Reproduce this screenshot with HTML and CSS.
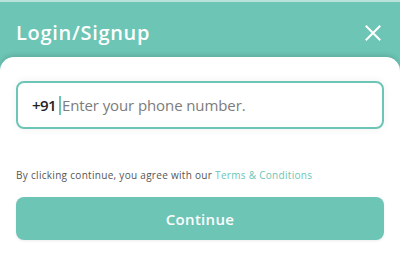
FILE: index.html
```html
<!DOCTYPE html>
<html>
<head>
<meta charset="utf-8">
<link rel="stylesheet" href="styles.css">
</head>
<body>
<div class="topline"></div>
<header class="header">
  <h1 class="title">Login/Signup</h1>
  <button class="close" aria-label="Close">
    <svg width="16" height="16" viewBox="0 0 16 16"><path d="M1.5 1.5 L14.5 14.5 M14.5 1.5 L1.5 14.5" stroke="#fff" stroke-width="2" stroke-linecap="square" fill="none"/></svg>
  </button>
</header>
<main class="card">
  <div class="phone">
    <span class="code">+91</span>
    <span class="caret"></span>
    <span class="placeholder">Enter your phone number.</span>
  </div>
  <p class="terms">By clicking continue, you agree with our <a class="link">Terms &amp; Conditions</a></p>
  <button class="continue">Continue</button>
</main>
</body>
</html>
```
FILE: styles.css
```css
* { box-sizing: border-box; }
html, body { margin: 0; padding: 0; }
body {
  width: 400px;
  height: 253px;
  overflow: hidden;
  background: #6cc5b5;
  font-family: "Open Sans", "Liberation Sans", sans-serif;
}
.topline {
  height: 2px;
  background: #b9e2da;
}
.header {
  height: 55px;
  display: flex;
  align-items: center;
  justify-content: space-between;
  padding: 5px 19px 0 16px;
}
.title {
  margin: 0;
  color: #fff;
  font-size: 20px;
  font-weight: 600;
  letter-spacing: 0.7px;
}
.close {
  background: none;
  border: 0;
  padding: 0;
  display: flex;
  margin-top: 2px;
}
.card {
  background: #fff;
  border-radius: 14px 14px 0 0;
  box-shadow: 0 -2px 5px rgba(0, 0, 0, 0.12);
  height: 196px;
  padding: 24px 16px 0;
}
.phone {
  height: 48px;
  border: 2px solid #6cc5b5;
  border-radius: 8px;
  display: flex;
  align-items: center;
  padding-left: 14px;
  font-size: 15px;
  box-shadow: 0 0 8px rgba(0,0,0,0.06);
}
.code {
  color: #222;
  font-weight: 600;
  letter-spacing: -0.6px;
}
.caret {
  width: 2px;
  height: 19px;
  background: #6cc5b5;
  margin: 0 1px 0 3px;
}
.placeholder {
  color: #7c7c7c;
  letter-spacing: -0.1px;
}
.terms {
  margin: 40px 0 0;
  font-size: 10px;
  letter-spacing: 0.3px;
  color: #555;
  line-height: 13px;
}
.link { color: #6cc5b5; }
.continue {
  display: block;
  width: 100%;
  height: 43px;
  margin-top: 15px;
  border: 0;
  border-radius: 8px;
  background: #6cc5b5;
  color: #fff;
  font-family: inherit;
  font-size: 15px;
  font-weight: 600;
  letter-spacing: 0.3px;
  box-shadow: 0 1px 3px rgba(0,0,0,0.08);
}
```
